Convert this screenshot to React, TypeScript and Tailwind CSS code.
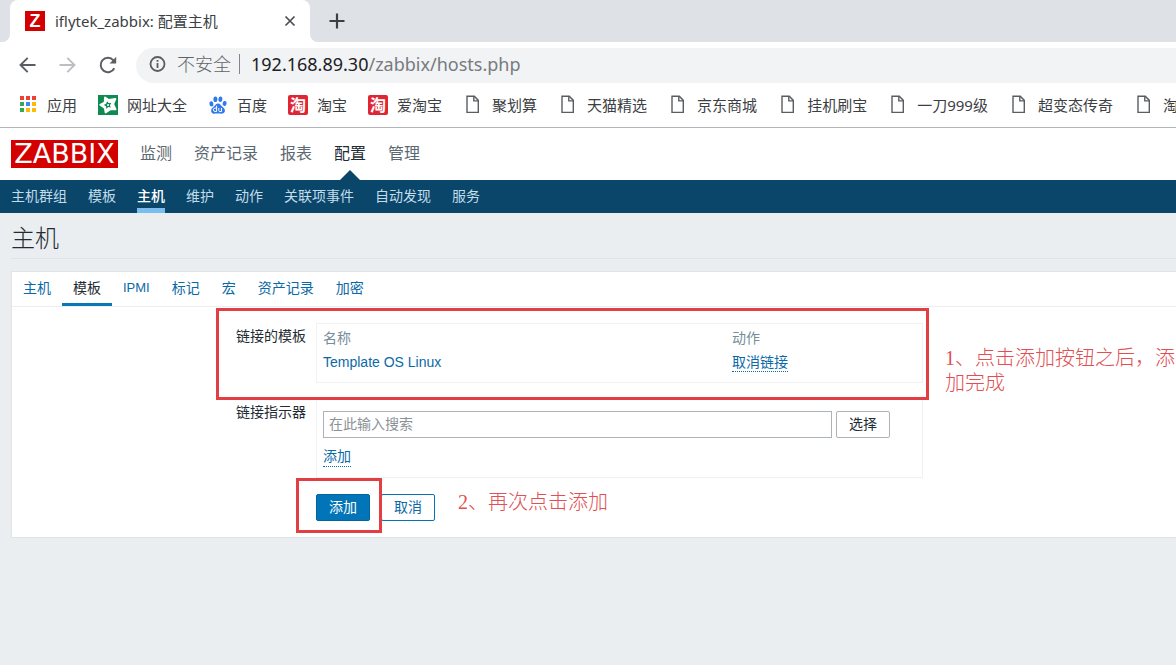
import React from "react";
import clsx from "clsx";

type Bookmark = { label: string; icon: React.ReactNode };

function ZabbixFavicon() {
  return (
    <span className="flex h-5 w-5 items-center justify-center bg-[#d40000] font-['Liberation_Sans'] text-lg leading-5 font-bold text-white">
      Z
    </span>
  );
}

function AppsIcon() {
  const colors = [
    "#ea4335", "#ea4335", "#ea4335",
    "#34a853", "#4285f4", "#fbbc05",
    "#34a853", "#fbbc05", "#fbbc05",
  ];
  return (
    <svg className="h-5 w-5" viewBox="0 0 20 20">
      {colors.map((c, i) => (
        <rect key={i} x={2 + (i % 3) * 6} y={1 + Math.floor(i / 3) * 6} width="4" height="4" fill={c} />
      ))}
    </svg>
  );
}

function StarIcon() {
  return (
    <svg className="h-5 w-5" viewBox="0 0 20 20">
      <rect width="20" height="20" fill="#0f8a50" />
      <path
        d="M7 2.5 10.8 5 17.4 4 15.2 9.2 17.6 14.4 12.4 14.2 7.6 17.6 6.8 13 2.2 9.8 6.6 7.6Z"
        fill="#fff"
        stroke="#fff"
        strokeWidth="1.8"
        strokeLinejoin="round"
      />
      <path d="m9.2 6.2 1.4 1.9 2.6-.1-1.3 2.200.9 2.400-2.500-.5-2 1.600-.3-2.500-2.200-1.300 2.300-1.100Z" fill="#0f8a50" />
      <circle cx="10" cy="10" r="1" fill="#fff" />
    </svg>
  );
}

function BaiduIcon() {
  return (
    <svg className="h-5 w-5" viewBox="0 0 20 20" fill="#3079ee">
      <ellipse cx="3.4" cy="8.8" rx="2" ry="2.6" transform="rotate(-12 3.4 8.8)" />
      <ellipse cx="7.4" cy="4.3" rx="2" ry="2.8" />
      <ellipse cx="12.4" cy="4.3" rx="2" ry="2.8" transform="rotate(10 12.4 4.3)" />
      <ellipse cx="16.6" cy="8.4" rx="2" ry="2.5" transform="rotate(14 16.6 8.4)" />
      <path d="M10 8.4c-2 0-2.6 1.8-4 3.1-1.5 1.3-3.3 2.5-2.8 4.9.4 2 2.3 2.5 4.2 2.2 1.8-.3 3.5-.3 5.2 0 2 .3 3.9-.3 4.3-2.3.4-2.3-1.3-3.4-2.8-4.8-1.4-1.3-2.1-3.1-4.1-3.1Z" />
      <g fill="none" stroke="#fff">
        <path d="M8.6 10.8v5.7H7.1a1.7 1.7 0 0 1 0-3.4h1.5" />
        <path d="M10.8 13v2.500q0 1 1 1h1.700V13" />
      </g>
    </svg>
  );
}

function TaobaoIcon() {
  return (
    <span className="flex h-5 w-5 items-center justify-center rounded-xs bg-[#e02633] text-base leading-5 font-bold text-white">
      淘
    </span>
  );
}

function PageIcon() {
  return (
    <svg className="h-5 w-5" viewBox="0 0 20 20" fill="none" stroke="#5a5d61" strokeWidth="1.4">
      <path d="M4 1.200h7.300l4 4.200v12h-11.300Z" />
      <path d="M10.800 1.200v4.700h4.500" />
    </svg>
  );
}

const bookmarks: Bookmark[] = [
  { label: "应用", icon: <AppsIcon /> },
  { label: "网址大全", icon: <StarIcon /> },
  { label: "百度", icon: <BaiduIcon /> },
  { label: "淘宝", icon: <TaobaoIcon /> },
  { label: "爱淘宝", icon: <TaobaoIcon /> },
  { label: "聚划算", icon: <PageIcon /> },
  { label: "天猫精选", icon: <PageIcon /> },
  { label: "京东商城", icon: <PageIcon /> },
  { label: "挂机刷宝", icon: <PageIcon /> },
  { label: "一刀999级", icon: <PageIcon /> },
  { label: "超变态传奇", icon: <PageIcon /> },
  { label: "淘", icon: <PageIcon /> },
];

const mainMenu = ["监测", "资产记录", "报表", "配置", "管理"];
const subMenu = ["主机群组", "模板", "主机", "维护", "动作", "关联项事件", "自动发现", "服务"];
const formTabs = ["主机", "模板", "IPMI", "标记", "宏", "资产记录", "加密"];

function BrowserChrome() {
  return (
    <div className="overflow-hidden border-b border-[#b3b5b8] bg-white font-['Noto_Sans','Noto_Sans_CJK_SC',sans-serif] whitespace-nowrap text-[#3c4043]">
      {/* Tab strip */}
      <div className="flex h-[42px]">
        <div className="w-[10px] rounded-br-lg bg-[#dee1e6]" />
        <div className="w-[300px] bg-[#dee1e6]">
          <div className="flex h-full items-center rounded-t-lg bg-white pr-3 pl-[15px]">
            <ZabbixFavicon />
            <span className="ml-[10px] flex-1 text-[15px]">iflytek_zabbix: 配置主机</span>
            <button aria-label="关闭" className="flex h-4 w-4 items-center justify-center">
              <svg className="h-3 w-3" viewBox="0 0 12 12" stroke="#4a4d51" strokeWidth="1.7">
                <path d="m1.500 1.500 9 9M10.500 1.500l-9 9" />
              </svg>
            </button>
          </div>
        </div>
        <div className="flex flex-1 items-center rounded-bl-lg bg-[#dee1e6] pl-[19px]">
          <button aria-label="新标签页">
            <svg className="h-4 w-4" viewBox="0 0 16 16" stroke="#3c4043" strokeWidth="2.2">
              <path d="M8 .5v15M.5 8h15" />
            </svg>
          </button>
        </div>
      </div>

      {/* Toolbar */}
      <div className="flex h-[46px] items-center pl-[18px]">
        <button aria-label="后退">
          <svg className="h-5 w-5" viewBox="0 0 20 20" fill="none" stroke="#5a5d61" strokeWidth="1.900">
            <path d="M17.500 10h-15M9.700 2.800 2.500 10l7.200 7.200" />
          </svg>
        </button>
        <button aria-label="前进" className="ml-5">
          <svg className="h-5 w-5" viewBox="0 0 20 20" fill="none" stroke="#bcbec1" strokeWidth="1.900">
            <path d="M1.500 10h15M9.300 2.800l7.200 7.200-7.200 7.200" />
          </svg>
        </button>
        <button aria-label="重新加载" className="ml-5">
          <svg className="h-5 w-5" viewBox="0 0 20 20" fill="none" stroke="#5a5d61" strokeWidth="2">
            <path d="M16.300 13.200A7.200 7.200 0 1 1 15.400 5.300" />
            <path d="M18.200 1.800v6.600h-6.600Z" fill="#5a5d61" stroke="none" />
          </svg>
        </button>
        <div className="ml-[18px] flex h-[35px] flex-1 items-center rounded-l-full bg-[#f1f3f4] pb-0.5 pl-3 text-lg">
          <svg className="h-5 w-5" viewBox="0 0 20 20" fill="none" stroke="#5a5d61" strokeWidth="1.8">
            <circle cx="9.500" cy="10" r="7" />
            <path d="M9.500 9v5M9.500 6v1.800" />
          </svg>
          <span className="ml-[9px] font-light text-[#5f6368]">不安全</span>
          <span className="ml-2 h-5 w-px bg-[#80868b]" />
          <span className="ml-[11px] text-[#777b80]">
            <span className="text-[#202124]">192.168.89.30</span>/zabbix/hosts.php
          </span>
        </div>
      </div>

      {/* Bookmarks */}
      <nav className="flex h-[39px] items-center gap-[21px] pb-[5px] pl-[18px] text-[15px]">
        {bookmarks.map((b, i) => (
          <a key={i} href="#" className="flex shrink-0 items-center gap-[9px]">
            {b.icon}
            {b.label}
          </a>
        ))}
      </nav>
    </div>
  );
}

function Header() {
  return (
    <header className="whitespace-nowrap">
      <div className="flex h-[52px] items-center bg-white pl-[11px]">
        <a
          href="#"
          className="flex h-7 w-[107px] items-center justify-center bg-[#d40000] font-['DejaVu_Sans'] text-[27px] leading-7 text-white"
        >
          ZABBIX
        </a>
        <nav className="ml-[22px] flex h-full gap-[22px] text-base text-[#5b6871]">
          {mainMenu.map((item) => (
            <a
              key={item}
              href="#"
              className={clsx("relative flex items-center", item === "配置" && "text-[#1f2c33]")}
            >
              {item}
              {item === "配置" && (
                <svg className="absolute bottom-0 left-1.5 h-[10px] w-5" viewBox="0 0 20 10">
                  <path d="M0 10 10 0l10 10Z" fill="#0a466a" />
                </svg>
              )}
            </a>
          ))}
        </nav>
      </div>
      <nav className="flex h-[33px] gap-[21px] bg-[#0a466a] pl-[11px] text-sm text-[#c3dcea]">
        {subMenu.map((item) => (
          <a
            key={item}
            href="#"
            className={clsx(
              "flex items-center border-b-5 pt-1 leading-5",
              item === "主机" ? "border-[#7cbdef] font-medium text-white" : "border-transparent"
            )}
          >
            {item}
          </a>
        ))}
      </nav>
    </header>
  );
}

function LinkedTemplates() {
  return (
    <div className="flex gap-[10px]">
      <div className="w-[294px] pt-[3px] text-right leading-5">链接的模板</div>
      <div className="w-[607px] border border-[#eff1f2] px-1.5 pt-0.5 pb-2">
        <table className="w-full table-fixed text-left">
          <thead>
            <tr className="h-6 leading-5 text-[#768d99]">
              <th className="w-[409px] font-normal">名称</th>
              <th className="font-normal">动作</th>
            </tr>
          </thead>
          <tbody>
            <tr className="h-6 leading-5 text-[#0b6aa6]">
              <td className="text-sm">
                <a href="#">Template OS Linux</a>
              </td>
              <td>
                <button className="block border-b border-dotted border-[#0b6aa6] leading-[18px]">取消链接</button>
              </td>
            </tr>
          </tbody>
        </table>
      </div>
    </div>
  );
}

function LinkNewTemplates() {
  return (
    <div className="mt-4 flex gap-[10px]">
      <label htmlFor="template-search" className="w-[294px] pt-[3px] text-right leading-5">
        链接指示器
      </label>
      <div className="w-[607px] border border-[#eff1f2] px-1.5 pt-[11px] pb-[10px]">
        <div className="flex gap-1">
          <input
            id="template-search"
            type="text"
            placeholder="在此输入搜索"
            className="h-[27px] w-[509px] border border-[#acb4b9] px-[5px] pb-0.5 placeholder:text-[#8b9196]"
          />
          <button className="h-[27px] w-[54px] rounded-xs border border-[#acb4b9] pb-0.5 leading-5">选择</button>
        </div>
        <button className="mt-[9px] block border-b border-dotted border-[#0b6aa6] leading-[19px] text-[#0b6aa6]">
          添加
        </button>
      </div>
    </div>
  );
}

export default function App() {
  return (
    <div className="min-h-screen overflow-x-hidden bg-[#ebeef0]">
      <BrowserChrome />
      <div className="font-['Liberation_Sans','Noto_Sans_CJK_SC',sans-serif] text-sm text-[#1f2c33]">
        <Header />
        <main className="pl-[11px]">
          <h1 className="flex h-[46px] items-center border-b border-[#dfe4e7] pt-1.5 text-2xl leading-9 font-light">
            主机
          </h1>
          <div className="relative mt-3 border border-r-0 border-[#dfe4e7] bg-white pb-4">
            <nav className="flex h-[35px] border-b border-[#ebeef0] text-[#0b6aa6]">
              {formTabs.map((tab) => (
                <a
                  key={tab}
                  href="#"
                  className={clsx(
                    "flex items-center border-b-3 px-[11px]",
                    tab === "模板" ? "border-[#0b75b5] text-[#1f2c33]" : "border-transparent",
                    tab === "IPMI" && "pt-0.5 text-[13px]"
                  )}
                >
                  {tab}
                </a>
              ))}
            </nav>
            <form className="pt-4">
              <LinkedTemplates />
              <LinkNewTemplates />
              <div className="mt-4 ml-[304px] flex gap-[11px] leading-5">
                <button
                  type="button"
                  className="h-[27px] w-[54px] rounded-xs border border-[#02659f] bg-[#0275b8] pb-0.5 text-white"
                >
                  添加
                </button>
                <button
                  type="button"
                  className="h-[27px] w-[54px] rounded-xs border border-[#0275b8] pb-0.5 text-[#0b6aa6]"
                >
                  取消
                </button>
              </div>
            </form>

            {/* Step annotations drawn over the form */}
            <div className="pointer-events-none absolute top-9 left-[204px] h-[92px] w-[713px] border-3 border-[#e23e44]" />
            <div className="pointer-events-none absolute top-[206px] left-[284px] h-[55px] w-[86px] border-3 border-[#e23e44]" />
            <p className="absolute top-[74px] left-[933px] w-[232px] font-['Liberation_Serif','Noto_Sans_CJK_SC',serif] text-xl leading-[25px] font-light text-[#e04f53]">
              1、点击添加按钮之后，添加完成
            </p>
            <p className="absolute top-[218px] left-[446px] font-['Liberation_Serif','Noto_Sans_CJK_SC',serif] text-xl leading-[25px] font-light text-[#e04f53]">
              2、再次点击添加
            </p>
          </div>
        </main>
      </div>
    </div>
  );
}
